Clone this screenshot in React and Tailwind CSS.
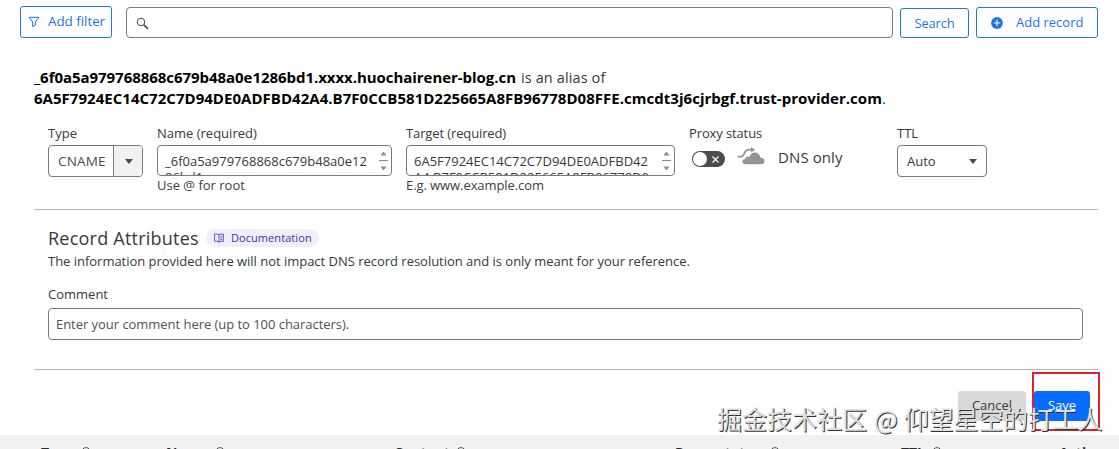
const HEADERS = [
  { label: "Type", width: "w-[125px]", gap: "gap-[7px]" },
  { label: "Name", width: "w-[228px]", gap: "gap-[8px]" },
  { label: "Content", width: "w-[281px]", gap: "gap-[6px]" },
  { label: "Proxy status", width: "w-[226px]", gap: "gap-[9px]" },
  { label: "TTL", width: "w-[158px]", gap: "gap-[7px]" },
];

const FilterIcon = () => (
  <svg width="12" height="12" viewBox="0 0 12 12" fill="none" stroke="currentColor" strokeWidth="1" strokeLinejoin="round">
    <path d="M1 1.3h10L7.4 6v2.9L4.7 10.8V6z" />
  </svg>
);

const SearchIcon = () => (
  <svg width="13" height="13" viewBox="0 0 13 13" fill="none" stroke="#444" strokeWidth="1">
    <circle cx="5" cy="5" r="3.8" />
    <path d="M7.8 7.8l4.2 4" strokeWidth="1.6" />
  </svg>
);

const PlusIcon = () => (
  <svg width="12" height="12" viewBox="0 0 12 12">
    <circle cx="6" cy="6" r="5.9" fill="currentColor" />
    <path d="M6 2.8v6.4M2.8 6h6.4" stroke="#fff" strokeWidth="1.1" />
  </svg>
);

const CloudIcon = () => (
  <svg width="28" height="18" viewBox="0 0 28 18">
    <path
      d="M0.5 9.6h3.2c2 0 2.7-1 3.6-3.1C8.4 3.700 9.7 2.600 12 2.600h2.500"
      fill="none"
      stroke="#929497"
      strokeWidth="1.9"
    />
    <path d="M14 0l4.200 2.700L14 5.400z" fill="#929497" />
    <path
      d="M9 17.200c-2.200 0-3.700-1-3.700-2.600 0-1.700 1.300-2.700 3-2.700.1-1.500 1.100-2.400 2.400-2.400.7 0 1.200.2 1.600.5C13.200 7.200 15.200 5.400 17.900 5.400c3 0 5.100 2.200 5.400 5 2.400.2 4.200 1.500 4.200 3.600 0 2-1.500 3.200-3.600 3.200z"
      fill="#929497"
    />
  </svg>
);

const BookIcon = () => (
  <svg width="10" height="10" viewBox="0 0 10 10" fill="none" stroke="currentColor" strokeWidth="0.8">
    <path d="M0.600 1.100h3.200L5 1.800l1.200-.7h3.200v7.200H6.200L5 9.200l-1.200-.9H.6zM5 1.800v7.400M6.400 3.100h1.800M6.400 4.800h1.800M6.400 6.500h1.800" />
  </svg>
);

const Caret = () => (
  <svg width="8" height="5" viewBox="0 0 8 5">
    <path d="M0 0h8L4 5z" fill="#4b4b4b" />
  </svg>
);

const HelpIcon = () => (
  <svg width="10" height="10" viewBox="0 0 10 10" fill="none" stroke="#555">
    <circle cx="5" cy="5" r="4.400" />
  </svg>
);

// Small up / down scroll arrows shown on the right of a clipped text area
const ScrollArrows = () => (
  <svg className="mt-[5px] shrink-0" width="9" height="21" viewBox="0 0 9 21">
    <path d="M1.500 4.500L4.500 0.500l3 4zM1.500 15.500h6l-3 4z" fill="#8b8b8b" />
    <path d="M0 9.500h9" stroke="#8b8b8b" />
  </svg>
);

const Field = ({ label, hint, width, children }) => (
  <div className={`flex flex-col ${width}`}>
    <div className="h-[20px] leading-[16px] whitespace-nowrap">{label}</div>
    {children}
    {hint && <div className="leading-[18px] whitespace-nowrap text-[#404040]">{hint}</div>}
  </div>
);

const ClippedArea = ({ lines }) => (
  <div className="flex h-[31px] justify-between overflow-hidden rounded-[4px] border border-[#77797b] pr-[3px] pl-[7px]">
    <div className="pt-[7px] leading-[16px] whitespace-nowrap">
      {lines.map((line) => (
        <div key={line}>{line}</div>
      ))}
    </div>
    <ScrollArrows />
  </div>
);

const TopBar = () => (
  <div className="flex h-[38px] items-end pl-[20px]">
    <button className="flex h-[32px] w-[92px] items-center gap-[8px] rounded-[3px] border border-[#2277d8] pb-[1px] pl-[7px] text-[13.400px] tracking-[-0.030px] whitespace-nowrap text-[#1f73e8]">
      <FilterIcon />
      <span>Add filter</span>
    </button>
    <div className="ml-[14px] flex h-[31px] w-[767px] items-center rounded-[4px] border border-[#77797b] pt-[2px] pl-[9px]">
      <SearchIcon />
    </div>
    <button className="ml-[7px] flex h-[30px] w-[69px] items-center justify-center rounded-[3px] border border-[#2277d8] pt-[1px] tracking-[-0.200px] text-[#1f73e8]">
      Search
    </button>
    <button className="ml-[7px] flex h-[31px] w-[122px] items-center gap-[13px] rounded-[3px] border border-[#2277d8] pl-[14px] whitespace-nowrap text-[#1f73e8]">
      <PlusIcon />
      <span>Add record</span>
    </button>
  </div>
);

const RecordFields = () => (
  <div className="mt-[16px] flex h-[84px] pl-[14px]">
    <Field label="Type" width="w-[95px]">
      <div className="flex h-[32px] overflow-hidden rounded-[4px] border border-[#77797b]">
        <div className="flex w-[65px] items-center border-r border-[#77797b] pl-[9px] text-[13.500px] tracking-[0.150px] text-[#4b4b4b]">
          CNAME
        </div>
        <div className="flex flex-1 items-center justify-center bg-[#f2f2f2] pl-[2px]">
          <Caret />
        </div>
      </div>
    </Field>
    <div className="ml-[14px]">
      <Field label="Name (required)" hint="Use @ for root" width="w-[235px]">
        <ClippedArea lines={["_6f0a5a979768868c679b48a0e12", "86bd1"]} />
      </Field>
    </div>
    <div className="ml-[14px]">
      <Field
        label={<span className="tracking-[-0.120px]">Target (required)</span>}
        hint={<span className="tracking-[-0.080px]">E.g. www.example.com</span>}
        width="w-[269px]"
      >
        <ClippedArea lines={["6A5F7924EC14C72C7D94DE0ADFBD42", "A4.B7F0CCB581D225665A8FB96778D0"]} />
      </Field>
    </div>
    <div className="ml-[14px]">
      <Field label={<span className="tracking-[-0.120px]">Proxy status</span>} width="w-[208px]">
        <div className="flex h-[26px] items-center pl-[3px]">
          <div className="mt-[2px] flex h-[16px] w-[33px] items-center justify-between rounded-full bg-[#4d4d4d] pr-[6px] pl-[1px]">
            <span className="h-[14px] w-[14px] rounded-full bg-white" />
            <svg width="7" height="7" viewBox="0 0 7 7" stroke="#fff" strokeWidth="1.1">
              <path d="M.5.5l6 6M6.500.5l-6 6" />
            </svg>
          </div>
          <div className="mb-[4px] ml-[12px]">
            <CloudIcon />
          </div>
          <span className="mb-[2px] ml-[13px] text-[15px] tracking-[0.100px] whitespace-nowrap">DNS only</span>
        </div>
      </Field>
    </div>
    <Field label="TTL" width="w-[90px]">
      <div className="flex h-[32px] items-center justify-between rounded-[4px] border border-[#77797b] pt-[1px] pr-[9px] pl-[9px]">
        <span>Auto</span>
        <Caret />
      </div>
    </Field>
  </div>
);

const RecordAttributes = () => (
  <div className="h-[159px] pl-[14px]">
    <div className="flex h-[37px] items-end">
      <h2 className="h-[19px] text-[18px] leading-[20px] tracking-[0.230px] whitespace-nowrap">Record Attributes</h2>
      <a className="ml-[7px] flex h-[18px] w-[113px] items-center gap-[7px] rounded-full bg-[#f1eefc] pl-[8px] text-[11px] tracking-[0.080px] text-[#4530a8]">
        <BookIcon />
        <span>Documentation</span>
      </a>
    </div>
    <p className="mt-[5px] leading-[18px] tracking-[-0.020px] whitespace-nowrap">
      The information provided here will not impact DNS record resolution and is only meant for your reference.
    </p>
    <div className="mt-[16px] leading-[16px]">Comment</div>
    <div className="mt-[6px] flex h-[32px] w-[1035px] items-center rounded-[4px] border border-[#77797b] pt-[2px] pl-[7px] tracking-[-0.040px] text-[#505254]">
      Enter your comment here (up to 100 characters).
    </div>
  </div>
);

const TableHeader = () => (
  <div className="flex h-[14px] overflow-hidden bg-[#f1f1f1] pl-[41px] text-[14px] font-bold text-[#2b2b2b]">
    {HEADERS.map(({ label, width, gap }) => (
      <div key={label} className={`flex shrink-0 items-start pt-[9px] leading-[18px] ${width} ${gap}`}>
        <span className="tracking-[-0.100px] whitespace-nowrap">{label}</span>
        <span className="mt-[3px]">
          <HelpIcon />
        </span>
      </div>
    ))}
    <div className="shrink-0 pt-[9px] leading-[18px]">Actions</div>
  </div>
);

const App = () => {
  return (
    <div className="relative h-[449px] w-[1119px] overflow-hidden bg-white font-['Open_Sans','Noto_Sans',sans-serif] text-[13px] text-[#36393a]">
      <TopBar />

      <div className="ml-[34px] w-[1064px]">
        {/* Alias summary */}
        <p className="pt-[29px] text-[15px] leading-[21px] whitespace-nowrap">
          <b className="tracking-[-0.045px] text-black">_6f0a5a979768868c679b48a0e1286bd1.xxxx.huochairener-blog.cn</b>
          <span className="ml-[5px] text-[14.500px] tracking-[0.120px]">is an alias of</span>
          <br />
          <b className="tracking-[0.030px] text-black">
            6A5F7924EC14C72C7D94DE0ADFBD42A4.B7F0CCB581D225665A8FB96778D08FFE.cmcdt3j6cjrbgf.trust-provider.com
          </b>
          .
        </p>

        <RecordFields />
        <hr className="border-[#b5b6b7]" />
        <RecordAttributes />
        <hr className="border-[#b5b6b7]" />

        <div className="flex h-[65px] items-start justify-end gap-[8px] pt-[21px] pr-[8px]">
          <button className="h-[30px] w-[68px] rounded-[3px] bg-[#d9d9d9] pb-[1px]">Cancel</button>
          <button className="h-[30px] w-[56px] rounded-[3px] bg-[#056cff] pb-[1px] text-white">Save</button>
        </div>
      </div>

      <TableHeader />

      {/* Highlight around the save button */}
      <div className="absolute top-[372px] left-[1032px] h-[59px] w-[68px] border-2 border-[#d9232e]" />

      {/* Watermark */}
      <div className="absolute top-[400px] left-[717px] flex font-['Noto_Sans_CJK_SC',sans-serif] text-[25px] leading-[36px] whitespace-nowrap text-[#dedede] [text-shadow:1px_1px_0_#333]">
        <span>掘金技术社区</span>
        <span className="ml-[7px]">@</span>
        <span className="ml-[6px] tracking-[-0.150px]">仰望星空的打工人</span>
      </div>
    </div>
  );
};

export default App;
